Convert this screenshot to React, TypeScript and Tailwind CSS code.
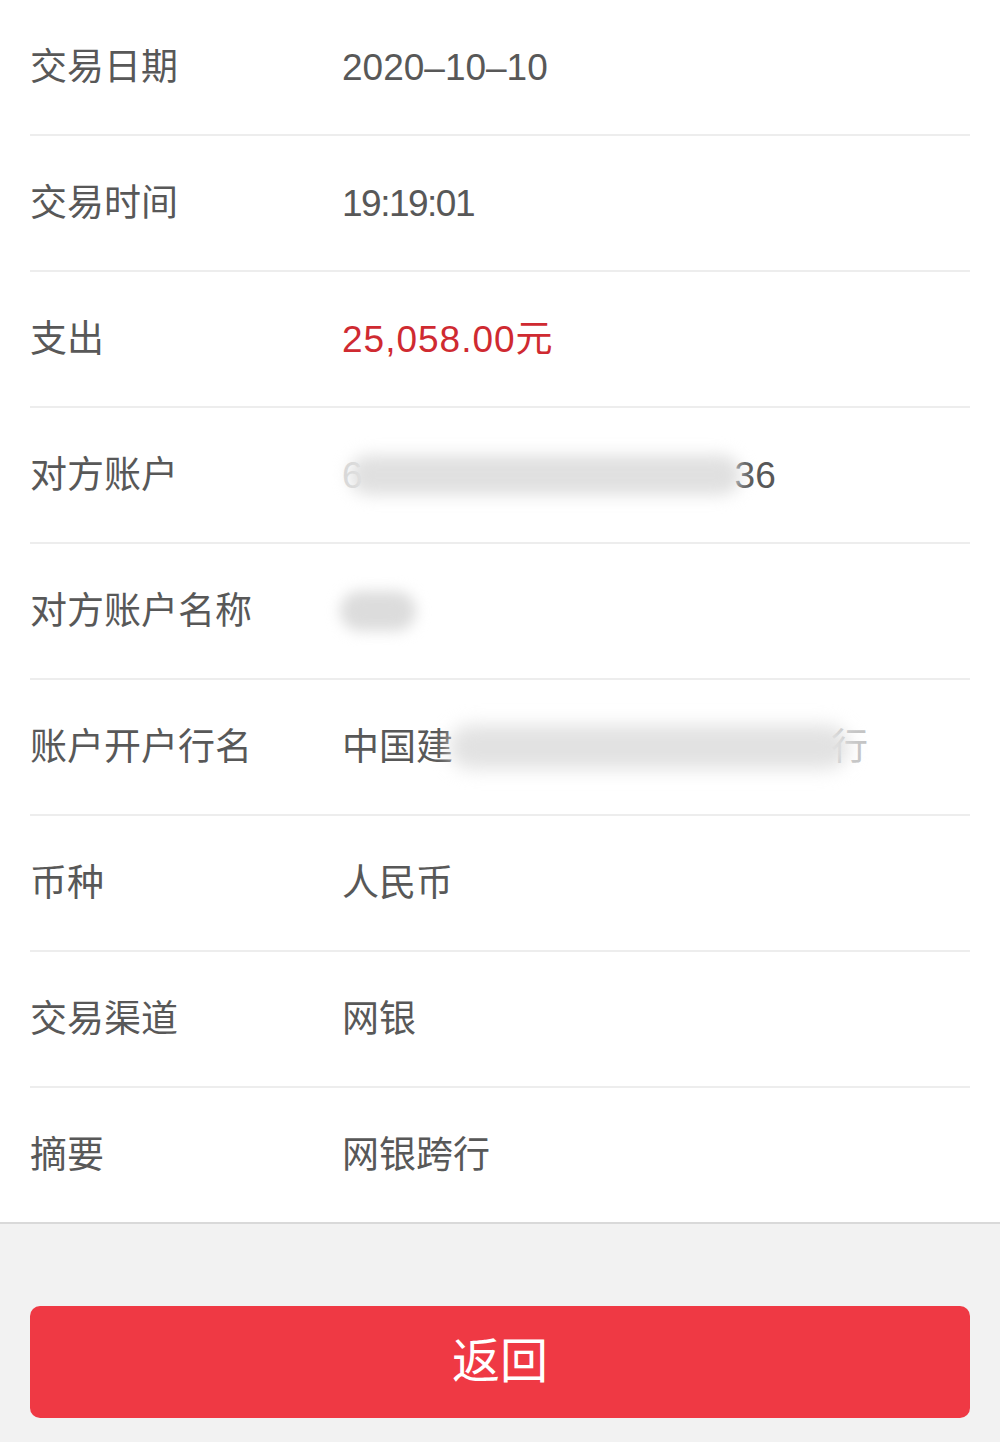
const rows: { label: string; value: React.ReactNode }[] = [
  { label: "交易日期", value: "2020–10–10" },
  { label: "交易时间", value: <span className="tracking-[-1.5px]">19:19:01</span> },
  {
    label: "支出",
    value: <span className="tracking-[1px] text-[#cf2a31]">25,058.00元</span>,
  },
  {
    label: "对方账户",
    value: (
      <span className="flex items-center">
        <span className="text-[#d6d6d6]">6</span>
        <span className="-ml-[14px] h-[40px] w-[392px] rounded-full bg-[#e0e0e0] blur-[8px]" />
        <span className="-ml-[6px]">36</span>
      </span>
    ),
  },
  {
    label: "对方账户名称",
    value: (
      <span className="flex items-center">
        <span className="-ml-[2px] h-[40px] w-[76px] rounded-full bg-[#dcdcdc] blur-[7px]" />
      </span>
    ),
  },
  {
    label: "账户开户行名",
    value: (
      <span className="flex items-center">
        <span>中国建</span>
        <span className="-ml-[4px] h-[44px] w-[400px] rounded-full bg-[#e2e2e2] blur-[9px]" />
        <span className="-ml-[18px] text-[#c4c4c4]">行</span>
      </span>
    ),
  },
  { label: "币种", value: "人民币" },
  { label: "交易渠道", value: "网银" },
  { label: "摘要", value: "网银跨行" },
];

export default function App() {
  return (
    <div
      className="min-h-[1442px] w-[1000px] bg-[#f2f2f2]"
      style={{
        fontFamily: '"Liberation Sans", "Noto Sans CJK SC", sans-serif',
      }}
    >
      <div className="bg-white">
        {rows.map((row, i) => {
          const last = i === rows.length - 1;
          return (
            <div
              key={row.label}
              className={
                last ? "border-b-2 border-[#d9d9d9] pl-[30px]" : "px-[30px]"
              }
            >
              <div className="flex h-[134px] items-center">
                <div className="w-[312px] text-[37px] leading-none text-[#585858]">
                  {row.label}
                </div>
                <div className="text-[37px] leading-none text-[#585858]">
                  {row.value}
                </div>
              </div>
              {!last && <div className="h-[2px] bg-[#ededed]" />}
            </div>
          );
        })}
      </div>

      <div className="px-[30px] pt-[82px]">
        <button className="flex h-[112px] w-full items-center justify-center rounded-[10px] bg-[#ef3944] text-[48px] text-white">
          返回
        </button>
      </div>
    </div>
  );
}
